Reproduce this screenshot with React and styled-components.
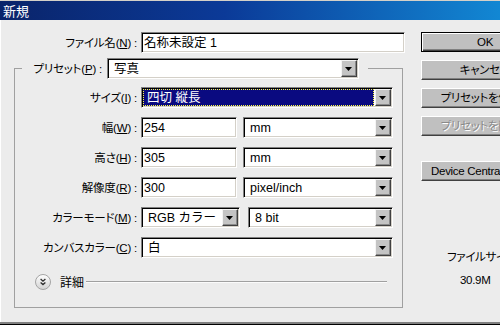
import React from 'react';
import styled, { createGlobalStyle } from 'styled-components';

const Global = createGlobalStyle`
  html, body { margin: 0; padding: 0; background: #ececec; }
  body {
    font-family: "Liberation Sans", "Noto Sans CJK JP", sans-serif;
    font-size: 12px;
    color: #000;
  }
  * { box-sizing: border-box; }
`;

const Window = styled.div`
  width: 500px;
  height: 325px;
  overflow: hidden;
  background: #ececec;
  border-top: 1px solid #d4d0c8;
  border-bottom: 1px solid #000;
  box-shadow: inset 0 -2px 0 #808080, inset 1px 0 0 #fff;
  display: flex;
  flex-direction: column;
`;

const TitleBar = styled.div`
  height: 19px;
  flex-shrink: 0;
  background: linear-gradient(to right, #0a246a 0%, #0b3a98 45%, #1287d3 100%);
  color: #fff;
  font-family: "Noto Sans CJK JP", sans-serif;
  font-size: 13px;
  line-height: 19px;
  padding-left: 3px;
`;

const Body = styled.div`
  flex: 1;
  display: flex;
  padding-top: 12px;
`;

const LeftCol = styled.div`
  width: 421px;
  flex-shrink: 0;
`;

const RightCol = styled.div`
  width: 128px;
  flex-shrink: 0;
  display: flex;
  flex-direction: column;
`;

const Row = styled.div`
  display: flex;
  align-items: center;
  height: 21px;
`;

const Fields = styled.div`
  display: flex;
  align-items: center;
  gap: ${p => p.$gap || 6}px;
`;

const Label = styled.div`
  width: ${p => p.$w}px;
  flex-shrink: 0;
  text-align: right;
  padding-right: ${p => p.$pr ?? 4}px;
  white-space: nowrap;
  font-size: 11.5px;
  letter-spacing: -0.2px;
  font-feature-settings: "palt";
  line-height: 14px;
  u { text-decoration: underline; text-underline-offset: 1px; }
`;

const Field = styled.div`
  width: ${p => p.$w}px;
  height: 21px;
  flex-shrink: 0;
  background: #fff;
  border: 1px solid;
  border-color: #808080 #fff #fff #808080;
  box-shadow: inset 1px 1px 0 #000, inset -1px -1px 0 #d4d0c8;
  padding: 1px;
  display: flex;
  align-items: stretch;
`;

const Value = styled.div`
  flex: 1;
  min-width: 0;
  display: flex;
  align-items: center;
  white-space: nowrap;
  overflow: hidden;
  line-height: 14px;
  padding-left: ${p => p.$pl ?? 5}px;
  margin-right: 1px;
  background: ${p => (p.$selected ? '#0a0a80' : 'transparent')};
  color: ${p => (p.$selected ? '#fff' : '#000')};
  outline: ${p => (p.$selected ? '1px dotted #ffff40' : 'none')};
  outline-offset: -1px;
  font-size: 12.5px;
`;

const ArrowBtn = styled.div`
  width: 16px;
  flex-shrink: 0;
  background: #c4c4c4;
  border: 1px solid;
  border-color: #f4f4f4 #404040 #404040 #f4f4f4;
  box-shadow: inset -1px -1px 0 #8a8a8a;
  display: flex;
  align-items: center;
  justify-content: center;
  padding-right: 1px;
`;

const Group = styled.fieldset`
  margin: 5px 0 0 14px;
  padding: 0 0 17px 0;
  width: 389px;
  min-width: 0;
  border: 1px solid #a0a0a0;
`;

const Legend = styled.legend`
  margin-left: 7px;
  padding: 0 9px 0 0;
  display: flex;
  align-items: center;
  height: 21px;
`;

const Rows = styled.div`
  display: flex;
  flex-direction: column;
  gap: 9px;
  padding-top: 8px;
`;

const DetailRow = styled.div`
  display: flex;
  align-items: center;
  height: 16px;
  margin-top: 16px;
  padding-left: 20px;
  padding-right: 15px;
`;

const DetailText = styled.span`
  margin-left: 9px;
  margin-right: 2px;
  font-family: "Noto Sans CJK JP", sans-serif;
  line-height: 14px;
`;

const Rule = styled.div`
  flex: 1;
  height: 2px;
  border-top: 1px solid #a0a0a0;
  border-bottom: 1px solid #fbfbfb;
`;

const Stack = styled.div`
  display: flex;
  flex-direction: column;
  gap: 8px;
`;

const Btn = styled.div`
  width: ${p => p.$w || 128}px;
  height: 20px;
  flex-shrink: 0;
  margin-top: ${p => p.$mt || 0}px;
  background: #c0c0c0;
  border: 1px solid;
  border-color: ${p => (p.$default ? '#000' : '#fff #404040 #404040 #fff')};
  box-shadow: ${p =>
    p.$default
      ? 'inset 1px 1px 0 #fff, inset -1px -1px 0 #404040, inset -2px -2px 0 #808080'
      : 'inset -1px -1px 0 #808080'};
  display: flex;
  align-items: center;
  justify-content: center;
  white-space: nowrap;
  line-height: 14px;
  font-size: 11.5px;
  letter-spacing: -0.3px;
  font-feature-settings: "palt";
  color: ${p => (p.$disabled ? '#8a8a8a' : '#000')};
  text-shadow: ${p => (p.$disabled ? '1px 1px 0 #fff' : 'none')};
`;

const Info = styled.div`
  margin-top: ${p => p.$mt}px;
  padding-left: ${p => p.$indent}px;
  white-space: nowrap;
  line-height: 14px;
  font-size: 11.5px;
  letter-spacing: -0.3px;
  font-feature-settings: "palt";
`;

const Arrow = () => (
  <svg width="7" height="4" viewBox="0 0 7 4">
    <polygon points="0,0 7,0 3.5,4" fill="#000" />
  </svg>
);

const Combo = ({ w, children, selected, pl }) => (
  <Field $w={w}>
    <Value $selected={selected} $pl={pl}>{children}</Value>
    <ArrowBtn><Arrow /></ArrowBtn>
  </Field>
);

const Input = ({ w, children }) => (
  <Field $w={w}>
    <Value $pl={1}>{children}</Value>
  </Field>
);

const DetailIcon = () => (
  <svg width="16" height="16" viewBox="0 0 16 16">
    <defs>
      <linearGradient id="dg" x1="0" y1="0" x2="0" y2="1">
        <stop offset="0" stopColor="#ffffff" />
        <stop offset="1" stopColor="#d2d2d2" />
      </linearGradient>
    </defs>
    <circle cx="8" cy="8" r="7.5" fill="url(#dg)" stroke="#a4a4a4" />
    <path d="M5.6 5 L8 7.2 L10.4 5 M5.6 8.4 L8 10.6 L10.4 8.4" fill="none" stroke="#303030" strokeWidth="1.3" />
  </svg>
);

const L = ({ text, k }) => (
  <>
    {text}(<u>{k}</u>) :
  </>
);

export default function App() {
  return (
    <>
      <Global />
      <Window>
        <TitleBar>新規</TitleBar>
        <Body>
          <LeftCol>
            <Row>
              <Label $w={141}><L text="ファイル名" k="N" /></Label>
              <Input w={264}>名称未設定 1</Input>
            </Row>
            <Group>
              <Legend>
                <Label $w={85} $pr={5}><L text="プリセット" k="P" /></Label>
                <Combo w={252}>写真</Combo>
              </Legend>
              <Rows>
                <Row>
                  <Label $w={126}><L text="サイズ" k="I" /></Label>
                  <Combo w={252} selected pl={4}>四切 縦長</Combo>
                </Row>
                <Row>
                  <Label $w={126}><L text="幅" k="W" /></Label>
                  <Fields>
                    <Input w={96}>254</Input>
                    <Combo w={150}>mm</Combo>
                  </Fields>
                </Row>
                <Row>
                  <Label $w={126}><L text="高さ" k="H" /></Label>
                  <Fields>
                    <Input w={96}>305</Input>
                    <Combo w={150}>mm</Combo>
                  </Fields>
                </Row>
                <Row>
                  <Label $w={126}><L text="解像度" k="R" /></Label>
                  <Fields>
                    <Input w={96}>300</Input>
                    <Combo w={150}>pixel/inch</Combo>
                  </Fields>
                </Row>
                <Row>
                  <Label $w={126}><L text="カラーモード" k="M" /></Label>
                  <Fields $gap={8}>
                    <Combo w={99}>RGB カラー</Combo>
                    <Combo w={145}>8 bit</Combo>
                  </Fields>
                </Row>
                <Row>
                  <Label $w={126}><L text="カンバスカラー" k="C" /></Label>
                  <Combo w={252}>白</Combo>
                </Row>
              </Rows>
              <DetailRow>
                <DetailIcon />
                <DetailText>詳細</DetailText>
                <Rule />
              </DetailRow>
            </Group>
          </LeftCol>
          <RightCol>
            <Stack>
              <Btn $default>OK</Btn>
              <Btn>キャンセル</Btn>
              <Btn>プリセットを保存...</Btn>
              <Btn $disabled>プリセットを削除...</Btn>
            </Stack>
            <Btn $w={100} $mt={25}>Device Central...</Btn>
            <Info $mt={69} $indent={26}>ファイルサイズ :</Info>
            <Info $mt={9} $indent={39}>30.9M</Info>
          </RightCol>
        </Body>
      </Window>
    </>
  );
}
